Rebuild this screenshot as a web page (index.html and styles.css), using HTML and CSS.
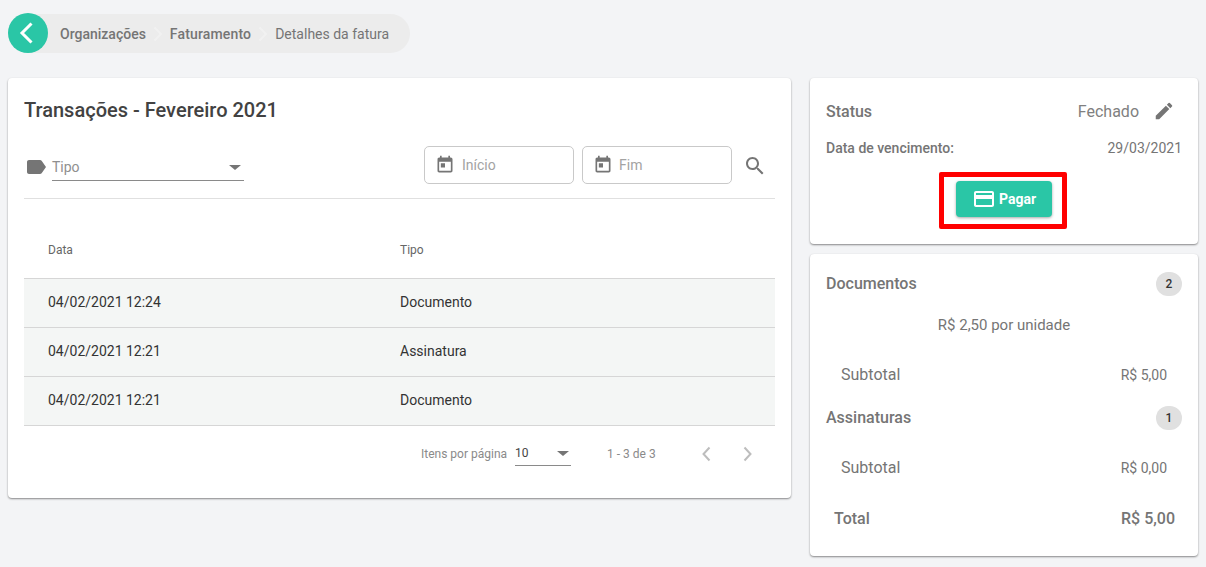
FILE: index.html
```html
<!DOCTYPE html>
<html lang="pt-BR">
<head>
<meta charset="utf-8">
<title>Detalhes da fatura</title>
<link rel="stylesheet" href="styles.css">
</head>
<body>
<nav class="crumbs">
  <button class="back" aria-label="Voltar"><svg width="24" height="24" viewBox="0 0 24 24"><path d="M15.500 2.500 6 12l9.500 9.500" fill="none" stroke="#fff" stroke-width="3"/></svg></button>
  <span class="crumb strong">Organizações</span>
  <svg class="sep" width="12" height="16" viewBox="0 0 12 16"><path d="M2.500 1.500 9 8l-6.500 6.500" fill="none" stroke="#f1f1f1" stroke-width="2"/></svg>
  <span class="crumb strong wide">Faturamento</span>
  <svg class="sep" width="12" height="16" viewBox="0 0 12 16"><path d="M2.500 1.500 9 8l-6.500 6.500" fill="none" stroke="#f1f1f1" stroke-width="2"/></svg>
  <span class="crumb">Detalhes da fatura</span>
</nav>
<div class="columns">
  <main class="card tx">
    <h1>Transações - Fevereiro 2021</h1>
    <div class="filters">
      <svg class="tag" width="24" height="24" viewBox="0 0 24 24"><path fill="#757575" d="M17.630 5.840C17.270 5.330 16.670 5 16 5L5 5.010C3.900 5.010 3 5.900 3 7v10c0 1.100.9 1.990 2 1.990L16 19c.67 0 1.270-.33 1.630-.84L22 12l-4.370-6.160z"/></svg>
      <div class="select"><span class="select-text">Tipo</span><i class="caret"></i></div>
      <div class="grow"></div>
      <div class="date"><svg width="20" height="20" viewBox="0 0 24 24"><path fill="#757575" d="M19 3h-1V1h-2v2H8V1H6v2H5c-1.110 0-1.990.9-1.990 2L3 19c0 1.100.89 2 2 2h14c1.100 0 2-.9 2-2V5c0-1.100-.9-2-2-2zm0 16H5V8h14v11zM7 10h5v5H7z"/></svg><span>Início</span></div>
      <div class="date end"><svg width="20" height="20" viewBox="0 0 24 24"><path fill="#757575" d="M19 3h-1V1h-2v2H8V1H6v2H5c-1.110 0-1.990.9-1.990 2L3 19c0 1.100.89 2 2 2h14c1.100 0 2-.9 2-2V5c0-1.100-.9-2-2-2zm0 16H5V8h14v11zM7 10h5v5H7z"/></svg><span>Fim</span></div>
      <svg class="search" width="24" height="24" viewBox="0 0 24 24"><path fill="#757575" d="M15.500 14h-.79l-.28-.27C15.410 12.590 16 11.110 16 9.500 16 5.910 13.090 3 9.500 3S3 5.910 3 9.500 5.910 16 9.500 16c1.610 0 3.090-.59 4.230-1.570l.27.28v.79l5 4.990L20.490 19l-4.990-5zm-6 0C7.010 14 5 11.990 5 9.500S7.010 5 9.500 5 14 7.010 14 9.500 11.990 14 9.500 14z"/></svg>
    </div>
    <div class="table">
      <div class="row head"><span class="c1">Data</span><span>Tipo</span></div>
      <div class="row"><span class="c1">04/02/2021 12:24</span><span>Documento</span></div>
      <div class="row"><span class="c1">04/02/2021 12:21</span><span>Assinatura</span></div>
      <div class="row"><span class="c1">04/02/2021 12:21</span><span>Documento</span></div>
    </div>
    <div class="pager">
      <span class="label">Itens por página</span>
      <div class="size"><span>10</span><i class="caret"></i></div>
      <span class="range">1 - 3 de 3</span>
      <svg width="24" height="24" viewBox="0 0 24 24"><path d="M14.500 5.500 8.500 12l6 6.500" fill="none" stroke="#bdbdbd" stroke-width="2"/></svg>
      <svg class="next" width="24" height="24" viewBox="0 0 24 24"><path d="M9.500 5.500 15.500 12l-6 6.500" fill="none" stroke="#bdbdbd" stroke-width="2"/></svg>
    </div>
  </main>
  <aside class="side">
    <section class="card status">
      <div class="line top"><span class="title">Status</span><span class="closed">Fechado</span><svg width="22" height="22" viewBox="0 0 24 24"><path fill="#757575" d="M3 17.250V21h3.750L17.810 9.940l-3.750-3.750L3 17.250zM20.710 7.040a1 1 0 0 0 0-1.410l-2.340-2.340a1 1 0 0 0-1.410 0l-1.830 1.830 3.750 3.750 1.830-1.830z"/></svg></div>
      <div class="line due"><strong>Data de vencimento:</strong><span>29/03/2021</span></div>
      <div class="pay-wrap"><div class="highlight"><button class="pay"><svg width="24" height="24" viewBox="0 0 24 24"><path fill="#fff" d="M20 4H4c-1.110 0-1.990.89-1.990 2L2 18c0 1.110.89 2 2 2h16c1.110 0 2-.89 2-2V6c0-1.110-.89-2-2-2zm0 14H4v-6h16v6zm0-10H4V6h16v2z"/></svg>Pagar</button></div></div>
    </section>
    <section class="card bill">
      <div class="line heading first"><span class="title">Documentos</span><span class="badge">2</span></div>
      <p class="unit">R$ 2,50 por unidade</p>
      <div class="line sub s1"><span>Subtotal</span><span class="amt">R$ 5,00</span></div>
      <div class="line heading second"><span class="title">Assinaturas</span><span class="badge">1</span></div>
      <div class="line sub s2"><span>Subtotal</span><span class="amt raised">R$ 0,00</span></div>
      <div class="line total"><span>Total</span><span>R$ 5,00</span></div>
    </section>
  </aside>
</div>
</body>
</html>
```
FILE: styles.css
```css
* { box-sizing: border-box; }
html, body { margin: 0; height: 100%; }
body {
  background: #f3f4f6;
  font-family: Roboto, "Liberation Sans", sans-serif;
  color: #757575;
  padding: 13px 8px 0 8px;
  overflow: hidden;
}
.crumbs {
  display: flex;
  align-items: center;
  width: 402px;
  height: 39px;
  margin-top: 1px;
  background: #ececec;
  border-radius: 20px;
  font-size: 14px;
}
.back {
  width: 40px;
  height: 40px;
  margin: -1px 12px 0 0;
  padding: 0;
  border: 0;
  border-radius: 50%;
  background: #2ac6a6;
  display: flex;
  align-items: center;
  justify-content: center;
  flex: none;
}
.crumb { color: #757575; }
.crumb.strong { font-weight: 500; }
.crumb.wide { letter-spacing: .15px; }
.sep { margin: 0 6px; flex: none; }
.columns {
  display: flex;
  align-items: flex-start;
  gap: 19px;
  margin-top: 25px;
}
.card {
  background: #fff;
  border-radius: 4px;
  box-shadow: 0 1px 2px rgba(0, 0, 0, .45);
}
.tx {
  width: 783px;
  height: 420px;
  padding: 0 16px;
  flex: none;
}
h1 {
  margin: 0;
  padding-top: 20px;
  font-size: 20px;
  line-height: 24px;
  font-weight: 500;
  color: #424242;
}
.filters {
  display: flex;
  align-items: flex-start;
  height: 53px;
  margin-top: 24px;
  border-bottom: 1px solid #e0e0e0;
}
.tag { margin: 9px 4px 0 0; flex: none; }
.select {
  width: 192px;
  height: 33px;
  margin-top: 2px;
  padding-top: 9px;
  border-bottom: 1px solid #8a8a8a;
  display: flex;
  justify-content: space-between;
  font-size: 14px;
  line-height: 20px;
  color: #8f8f8f;
}
.select .caret { margin-top: 8px; }
.caret {
  display: block;
  width: 0;
  height: 0;
  margin: 7px 3px 0 0;
  border-left: 6px solid transparent;
  border-right: 6px solid transparent;
  border-top: 5px solid #757575;
}
.grow { flex: 1; }
.date {
  width: 150px;
  height: 38px;
  margin-left: 8px;
  padding-left: 10px;
  display: flex;
  align-items: center;
  gap: 7px;
  border: 1px solid #c9c9c9;
  border-radius: 5px;
  font-size: 14px;
  color: #a3a3a3;
}
.date.end { gap: 6px; }
.search { margin: 8px 8px 0 11px; flex: none; }
.row {
  display: flex;
  align-items: center;
  height: 49px;
  padding: 0 0 2px 24px;
  background: #f4f6f5;
  border-bottom: 1px solid #d6d6d6;
  font-size: 14px;
  color: #333;
}
.row.head {
  height: 80px;
  background: #fff;
  font-size: 12px;
  color: #666;
  padding: 22px 0 0 24px;
}
.c1 { width: 352px; }
.pager {
  display: flex;
  align-items: center;
  height: 56px;
  font-size: 12px;
  color: #8a8a8a;
  margin-left: 397px;
}
.size {
  width: 56px;
  height: 23px;
  margin: 1px 0 0 8px;
  border-bottom: 1px solid #8a8a8a;
  display: flex;
  justify-content: space-between;
  color: #444;
  line-height: 21px;
}
.size .caret { margin: 8px 2px 0 0; }
.range { margin: 0 39px 0 36px; }
.next { margin-left: 16px; }
.side {
  width: 388px;
  flex: none;
  display: flex;
  flex-direction: column;
  gap: 10px;
}
.line { display: flex; justify-content: space-between; align-items: center; }
.status { height: 166px; padding: 0 16px; }
.top { height: 24px; margin-top: 21px; }
.top .closed { margin-left: auto; font-size: 16px; color: #808080; }
.top svg { margin-left: 14px; margin-right: 7px; }
.title { font-size: 16px; font-weight: 500; color: #757575; }
.due { margin-top: 15px; font-size: 14px; line-height: 20px; }
.due strong { font-weight: 500; }
.pay-wrap { display: flex; justify-content: center; margin-top: 14px; }
.highlight {
  width: 128px;
  height: 57px;
  border: 5px solid #f00;
  border-radius: 2px;
  padding: 4px 0 0 12px;
  margin-right: 2px;
}
.pay {
  width: 96px;
  height: 36px;
  padding: 0;
  border: 0;
  border-radius: 4px;
  background: #2ac6a6;
  box-shadow: 0 1px 3px rgba(0, 0, 0, .35);
  color: #fff;
  font: 700 14px Roboto, "Liberation Sans", sans-serif;
  display: flex;
  align-items: center;
  justify-content: center;
  gap: 3px;
}
.bill { height: 302px; padding: 0 16px; }
.first { margin-top: 17px; height: 24px; }
.second { margin-top: 20px; height: 24px; }
.badge {
  width: 26px;
  height: 24px;
  margin-top: 2px;
  border-radius: 12px;
  background: #e0e0e0;
  color: #333;
  font-size: 12px;
  font-weight: 500;
  display: flex;
  align-items: center;
  justify-content: center;
}
.unit {
  margin: 20px 0 0;
  font-size: 15px;
  line-height: 20px;
  text-align: center;
}
.sub { padding: 0 15px; font-size: 16px; line-height: 20px; }
.amt { font-size: 14px; }
.amt.raised { margin-bottom: 0; }
.s1 { margin-top: 30px; }
.s2 { margin-top: 29px; }
.total {
  margin-top: 30px;
  padding: 0 7px 0 8px;
  font-size: 16px;
  line-height: 22px;
  font-weight: 500;
}
```
